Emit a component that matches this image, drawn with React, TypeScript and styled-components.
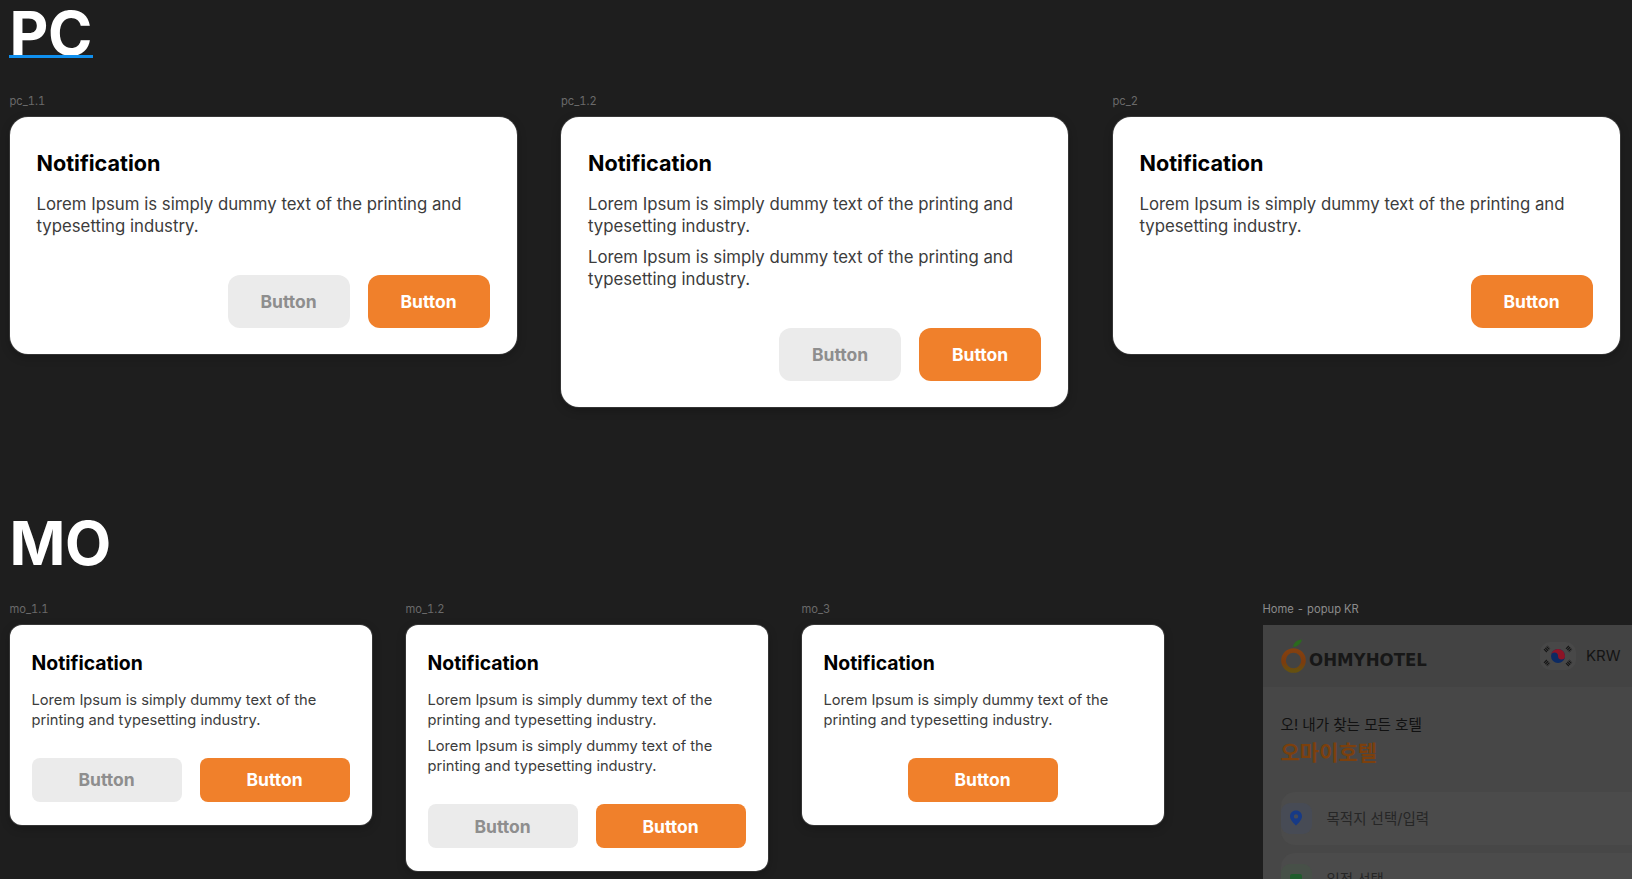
import styled, { createGlobalStyle } from 'styled-components';

const GlobalStyle = createGlobalStyle`
  html, body {
    margin: 0;
    height: 100%;
    overflow: hidden;
    background: #1e1e1e;
  }
  * { box-sizing: border-box; }
`;

const Page = styled.div`
  width: 1632px;
  height: 879px;
  overflow: hidden;
  padding-left: 9.5px;
  font-family: Inter, 'Noto Sans CJK KR', sans-serif;
  color: #fff;
`;

const Heading = styled.h1<{ $selected?: boolean }>`
  position: relative;
  margin: 0;
  display: inline-block;
  font-size: 60px;
  line-height: 66px;
  font-weight: 700;
  letter-spacing: -0.5px;
  color: #fff;

  ${({ $selected }) =>
    $selected &&
    `
    &::after {
      content: '';
      position: absolute;
      left: -1px;
      right: -1px;
      top: 55px;
      height: 2.5px;
      background: #0f8fee;
    }
  `}
`;

const PcSection = styled.section`
  height: 510px;
`;

const PcTitleRow = styled.div`
  height: 93.5px;
`;

const PcRow = styled.div`
  display: flex;
  gap: 44.5px;
  align-items: flex-start;
`;

const MoTitleRow = styled.div`
  height: 91.5px;
`;

const MoRow = styled.div`
  display: flex;
  gap: 34px;
  align-items: flex-start;
`;

const Frame = styled.div`
  display: flex;
  flex-direction: column;
`;

const FrameLabel = styled.div<{ $light?: boolean }>`
  height: 23px;
  font-size: 11.2px;
  line-height: 14px;
  font-variant-numeric: tabular-nums;
  color: ${({ $light }) => ($light ? '#8c8c8c' : '#6a6a6a')};
`;

const Card = styled.div<{ $mobile?: boolean }>`
  width: ${({ $mobile }) => ($mobile ? '362px' : '507px')};
  padding: ${({ $mobile }) => ($mobile ? '26px 22px 23px' : '33px 27px 26px')};
  background: #fff;
  border-radius: ${({ $mobile }) => ($mobile ? '12px' : '18px')};
  box-shadow: 0 0 0 1px rgba(255, 255, 255, 0.12), 0 3px 10px rgba(0, 0, 0, 0.25);
`;

const Title = styled.div<{ $mobile?: boolean }>`
  font-size: ${({ $mobile }) => ($mobile ? '19.4px' : '21.6px')};
  line-height: ${({ $mobile }) => ($mobile ? '24px' : '26px')};
  font-weight: 700;
  color: #000;
`;

const Body = styled.div<{ $mobile?: boolean }>`
  display: flex;
  flex-direction: column;
  gap: ${({ $mobile }) => ($mobile ? '6.5px' : '9px')};
  margin-top: ${({ $mobile }) => ($mobile ? '15px' : '17px')};
`;

const Paragraph = styled.p<{ $mobile?: boolean }>`
  margin: 0;
  font-size: ${({ $mobile }) => ($mobile ? '14.68px' : '16.77px')};
  line-height: ${({ $mobile }) => ($mobile ? '20px' : '22px')};
  color: #3c3c3c;
`;

const Actions = styled.div<{ $mobile?: boolean; $align: string }>`
  display: flex;
  justify-content: ${({ $align }) => $align};
  gap: 18px;
  margin-top: ${({ $mobile }) => ($mobile ? '28px' : '38px')};
`;

const Button = styled.button<{ $mobile?: boolean; $primary?: boolean }>`
  width: ${({ $mobile }) => ($mobile ? '150px' : '122px')};
  height: ${({ $mobile }) => ($mobile ? '44px' : '53px')};
  border: none;
  padding: 0;
  border-radius: ${({ $mobile }) => ($mobile ? '8px' : '12px')};
  background: ${({ $primary }) => ($primary ? '#f0802b' : '#ebebeb')};
  color: ${({ $primary }) => ($primary ? '#fff' : '#8e8e8e')};
  font-family: inherit;
  font-size: 17.5px;
  font-weight: 700;
`;

const PopupFrame = styled.div`
  margin-left: 65px;
  display: flex;
  flex-direction: column;
`;

const Popup = styled.div`
  width: 390px;
  height: 300px;
  background: #474747;
  overflow: hidden;
`;

const PopupHeader = styled.div`
  height: 62px;
  padding: 0 32px 0 18px;
  background: #434343;
  display: flex;
  align-items: center;
  justify-content: space-between;
`;

const Logo = styled.div`
  display: flex;
  align-items: flex-end;
  gap: 3px;
`;

const LogoText = styled.span`
  font-family: 'DejaVu Sans', sans-serif;
  font-size: 17.5px;
  line-height: 14px;
  font-weight: 700;
  color: #171717;
  margin-bottom: 6px;
  transform: scaleX(0.95);
  transform-origin: left center;
`;

const Currency = styled.div`
  display: flex;
  align-items: center;
  gap: 10px;
  font-size: 15px;
  color: #141414;
`;

const Flag = styled.div`
  width: 36px;
  height: 28px;
  border-radius: 10px;
  background: #484848;
  display: flex;
  align-items: center;
  justify-content: center;
`;

const PopupBody = styled.div`
  padding: 27px 18px 0;
`;

const Tagline = styled.div`
  font-size: 14.6px;
  line-height: 22px;
  color: #111;
`;

const Brand = styled.div`
  margin-top: 2.5px;
  font-size: 21px;
  line-height: 30px;
  font-weight: 700;
  color: #7c400d;
`;

const FieldList = styled.div`
  margin-top: 23.5px;
  display: flex;
  flex-direction: column;
  gap: 8px;
`;

const Field = styled.div`
  height: 53px;
  width: 372px;
  padding: 11px 12px 0 0;
  border-radius: 14px;
  background: #4b4b4b;
  display: flex;
  gap: 15px;
  font-size: 14.5px;
  color: #262626;
`;

const FieldIcon = styled.div<{ $tint: string }>`
  width: 31px;
  height: 31px;
  border-radius: 9px;
  background: ${({ $tint }) => $tint};
  display: flex;
  align-items: center;
  justify-content: center;
  flex-shrink: 0;
`;

const FieldText = styled.span`
  line-height: 31px;
`;

type NoticeProps = {
  label: string;
  mobile?: boolean;
  paragraphs?: number;
  single?: boolean;
};

const LOREM = 'Lorem Ipsum is simply dummy text of the printing and typesetting industry.';

function Notice({ label, mobile, paragraphs = 1, single }: NoticeProps) {
  return (
    <Frame>
      <FrameLabel>{label}</FrameLabel>
      <Card $mobile={mobile}>
        <Title $mobile={mobile}>Notification</Title>
        <Body $mobile={mobile}>
          {Array.from({ length: paragraphs }).map((_, i) => (
            <Paragraph key={i} $mobile={mobile}>
              {LOREM}
            </Paragraph>
          ))}
        </Body>
        <Actions $mobile={mobile} $align={mobile && single ? 'center' : 'flex-end'}>
          {!single && <Button $mobile={mobile}>Button</Button>}
          <Button $mobile={mobile} $primary>
            Button
          </Button>
        </Actions>
      </Card>
    </Frame>
  );
}

function OrangeLogo() {
  return (
    <svg width="25" height="34" viewBox="0 0 25 34" fill="none">
      <defs>
        <linearGradient id="ring" x1="0" y1="0" x2="0" y2="1">
          <stop offset="0" stopColor="#84400f" />
          <stop offset="0.6" stopColor="#7c3c0e" />
          <stop offset="1" stopColor="#66500f" />
        </linearGradient>
      </defs>
      <path d="M12 8 C12.5 4 15.5 1 21 0.5 C20 4.5 17 7.5 12 8 Z" fill="#2b6a1e" />
      <circle cx="12.5" cy="21.5" r="10" stroke="url(#ring)" strokeWidth="4.6" />
    </svg>
  );
}

function KoreanFlag() {
  return (
    <svg width="30" height="24" viewBox="0 0 30 24">
      <circle cx="15" cy="12" r="7" fill="#0c2a63" />
      <path d="M8 12 A7 7 0 0 1 22 12 A3.5 3.5 0 0 1 15 12 A3.5 3.5 0 0 0 8 12 Z" fill="#8d1426" />
      <g stroke="#151515" strokeWidth="4" strokeDasharray="1.2 0.6">
        <path d="M2 7 L6 3" />
        <path d="M24 3 L28 7" />
        <path d="M2 17 L6 21" />
        <path d="M24 21 L28 17" />
      </g>
    </svg>
  );
}

function PinIcon() {
  return (
    <svg width="14" height="16" viewBox="0 0 14 16">
      <path
        fillRule="evenodd"
        d="M7 0.5 C3.4 0.5 1 3.2 1 6.3 C1 10 5 13.6 7 15.5 C9 13.6 13 10 13 6.3 C13 3.2 10.6 0.5 7 0.5 Z M7 4.2 A2.2 2.2 0 1 1 7 8.6 A2.2 2.2 0 1 1 7 4.2 Z"
        fill="#173a86"
      />
    </svg>
  );
}

function CalendarIcon() {
  return (
    <svg width="14" height="14" viewBox="0 0 14 14">
      <rect x="1" y="2" width="12" height="11" rx="2" fill="#1f5c2c" />
    </svg>
  );
}

export default function App() {
  return (
    <Page>
      <GlobalStyle />
      <PcSection>
        <PcTitleRow>
          <Heading $selected>PC</Heading>
        </PcTitleRow>
        <PcRow>
          <Notice label="pc_1.1" />
          <Notice label="pc_1.2" paragraphs={2} />
          <Notice label="pc_2" single />
        </PcRow>
      </PcSection>
      <MoTitleRow>
        <Heading>MO</Heading>
      </MoTitleRow>
      <MoRow>
        <Notice label="mo_1.1" mobile />
        <Notice label="mo_1.2" mobile paragraphs={2} />
        <Notice label="mo_3" mobile single />
        <PopupFrame>
          <FrameLabel $light>Home - popup KR</FrameLabel>
          <Popup>
            <PopupHeader>
              <Logo>
                <OrangeLogo />
                <LogoText>OHMYHOTEL</LogoText>
              </Logo>
              <Currency>
                <Flag>
                  <KoreanFlag />
                </Flag>
                KRW
              </Currency>
            </PopupHeader>
            <PopupBody>
              <Tagline>오! 내가 찾는 모든 호텔</Tagline>
              <Brand>오마이호텔</Brand>
              <FieldList>
                <Field>
                  <FieldIcon $tint="#474b55">
                    <PinIcon />
                  </FieldIcon>
                  <FieldText>목적지 선택/입력</FieldText>
                </Field>
                <Field>
                  <FieldIcon $tint="#475048">
                    <CalendarIcon />
                  </FieldIcon>
                  <FieldText>일정 선택</FieldText>
                </Field>
              </FieldList>
            </PopupBody>
          </Popup>
        </PopupFrame>
      </MoRow>
    </Page>
  );
}
